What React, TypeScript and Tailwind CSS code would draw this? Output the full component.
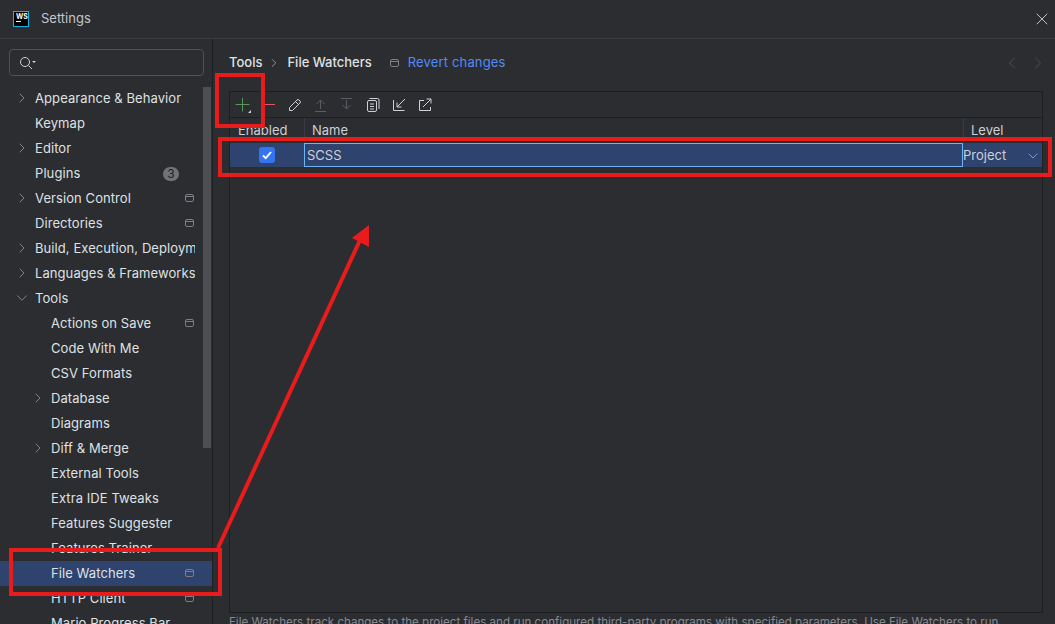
import { ChevronDown, ChevronLeft, ChevronRight, X } from "lucide-react";

type TreeItem = {
  label: string;
  depth: 0 | 1;
  arrow?: "right" | "down";
  project?: boolean;
  badge?: string;
  selected?: boolean;
};

const treeItems: TreeItem[] = [
  { label: "Appearance & Behavior", depth: 0, arrow: "right" },
  { label: "Keymap", depth: 0 },
  { label: "Editor", depth: 0, arrow: "right" },
  { label: "Plugins", depth: 0, badge: "3" },
  { label: "Version Control", depth: 0, arrow: "right", project: true },
  { label: "Directories", depth: 0, project: true },
  { label: "Build, Execution, Deployment", depth: 0, arrow: "right" },
  { label: "Languages & Frameworks", depth: 0, arrow: "right" },
  { label: "Tools", depth: 0, arrow: "down" },
  { label: "Actions on Save", depth: 1, project: true },
  { label: "Code With Me", depth: 1 },
  { label: "CSV Formats", depth: 1 },
  { label: "Database", depth: 1, arrow: "right" },
  { label: "Diagrams", depth: 1 },
  { label: "Diff & Merge", depth: 1, arrow: "right" },
  { label: "External Tools", depth: 1 },
  { label: "Extra IDE Tweaks", depth: 1 },
  { label: "Features Suggester", depth: 1 },
  { label: "Features Trainer", depth: 1 },
  { label: "File Watchers", depth: 1, project: true, selected: true },
  { label: "HTTP Client", depth: 1, project: true },
  { label: "Mario Progress Bar", depth: 1 },
];

function ProjectIcon({ className }: { className?: string }) {
  return (
    <svg width="10" height="9" viewBox="0 0 10 9" fill="none" className={className}>
      <rect x="0.5" y="0.5" width="8" height="7" rx="1.5" stroke="#7a7e85" />
      <path d="M1 2.5h7" stroke="#7a7e85" />
    </svg>
  );
}

function SearchIcon() {
  return (
    <svg width="20" height="16" viewBox="0 0 20 16" fill="none">
      <circle cx="7" cy="7" r="4.5" stroke="#ced0d6" />
      <path d="M10.5 10.5 14 14" stroke="#ced0d6" />
      <path d="M14 6h4l-2 2z" fill="#ced0d6" />
    </svg>
  );
}

function TreeRow({ item }: { item: TreeItem }) {
  return (
    <div
      className={`relative flex h-[25px] shrink-0 items-center pr-[17px] ${
        item.selected ? "bg-[#2e436e]" : ""
      } ${item.depth === 0 ? "pl-[35px]" : "pl-[51px]"}`}
    >
      {item.arrow === "right" && (
        <ChevronRight
          size={16}
          strokeWidth={1.1}
          className={`absolute top-[4px] text-[#9da0a8] ${item.depth === 0 ? "left-[14px]" : "left-[30px]"}`}
        />
      )}
      {item.arrow === "down" && (
        <ChevronDown size={18} strokeWidth={1} className="absolute left-[13px] top-[3px] text-[#9da0a8]" />
      )}
      <span className="min-w-0 flex-1 overflow-hidden whitespace-nowrap text-[13px] tracking-[0.08px] text-[#dfe1e5]">
        {item.label}
      </span>
      {item.project && <ProjectIcon className="ml-1 shrink-0" />}
      {item.badge && (
        <span className="mr-[16px] flex h-[14px] w-4 items-center justify-center rounded-full bg-[#6f737a] text-[12px] text-[#1e1f22]">
          {item.badge}
        </span>
      )}
    </div>
  );
}

function Sidebar() {
  return (
    <aside className="flex h-full w-[213px] shrink-0 flex-col overflow-hidden border-r border-[#1e1f22]">
      <div className="mx-[9px] mt-[10px] flex h-[27px] w-[195px] shrink-0 items-center rounded-[4px] border border-[#4e5157] pl-[8px]">
        <SearchIcon />
      </div>
      <div className="mt-[10px] flex min-h-0 flex-1">
        <div className="flex min-w-0 flex-1 flex-col">
          {treeItems.map((item) => (
            <TreeRow key={item.label} item={item} />
          ))}
        </div>
      </div>
    </aside>
  );
}

function ToolbarIcon({ children }: { children: React.ReactNode }) {
  return (
    <svg width="16" height="16" viewBox="0 0 16 16" fill="none" className="shrink-0">
      {children}
    </svg>
  );
}

function Toolbar() {
  return (
    <div className="flex h-[26px] shrink-0 items-center gap-[10px] border-b border-[#1e1f22] pl-[5px]">
      <svg width="16" height="16" viewBox="0 0 16 16" fill="none" className="shrink-0">
        <path d="M7.5 1v13.5M0.5 7.5h14" stroke="#57965c" strokeWidth="1" />
        <path d="M16 13v3h-3z" fill="#ced0d6" />
      </svg>
      <ToolbarIcon>
        <path d="M2 7.5h12" stroke="#db5c5c" />
      </ToolbarIcon>
      <ToolbarIcon>
        <path
          d="M2.5 13.5v-3l7.5-7.5a1.4 1.4 0 0 1 2 0l1 1a1.4 1.4 0 0 1 0 2l-7.5 7.5zM8.5 4.5l3 3"
          stroke="#ced0d6"
        />
      </ToolbarIcon>
      <ToolbarIcon>
        <path d="M7.5 12V3M3.5 7 7.5 3 11.5 7M2 14.5h11" stroke="#5a5d63" />
      </ToolbarIcon>
      <ToolbarIcon>
        <path d="M7.5 3v9M3.5 8 7.5 12 11.5 8M2 1.5h11" stroke="#5a5d63" />
      </ToolbarIcon>
      <ToolbarIcon>
        <rect x="2.5" y="3.5" width="9" height="11" rx="1.5" stroke="#ced0d6" />
        <path d="M4.5 1.5h8a1.5 1.5 0 0 1 1.5 1.5v9M5 7h4M5 9.5h4M5 12h4" stroke="#ced0d6" />
      </ToolbarIcon>
      <ToolbarIcon>
        <path d="M2.5 3v10.5h11M6 10l8-8M6 5.5V10h4.5" stroke="#ced0d6" />
      </ToolbarIcon>
      <ToolbarIcon>
        <path d="M7 3.5H2.5v10h11V10M6 10l8-8M9.5 2H14v4.5" stroke="#ced0d6" />
      </ToolbarIcon>
    </div>
  );
}

function WatchersTable() {
  return (
    <div className="ml-[16px] mr-[12px] mt-[18px] flex h-[522px] shrink-0 flex-col border border-[#1e1f22]">
      <Toolbar />
      <div className="flex h-[25px] shrink-0 text-[13px] text-[#ced0d6]">
        <div className="flex w-[75px] items-center border-r border-[#393b40] pl-[8px]">Enabled</div>
        <div className="flex flex-1 items-center border-r border-[#393b40] pl-[7px]">Name</div>
        <div className="flex w-[78px] items-center pl-[7px]">Level</div>
      </div>
      <div className="flex h-[24px] shrink-0 bg-[#2e436e] text-[13px]">
        <div className="flex w-[74px] items-center justify-center">
          <span className="flex h-4 w-4 items-center justify-center rounded-[3px] bg-[#3574f0]">
            <svg width="12" height="12" viewBox="0 0 12 12" fill="none">
              <path d="M2 6.5 4.8 9.2 10 3" stroke="#ffffff" strokeWidth="1.9" />
            </svg>
          </span>
        </div>
        <div className="flex flex-1 items-center border border-[#6fb2f5] pl-[2px] pt-[1px] text-[#ced0d6]">SCSS</div>
        <div className="flex w-[79px] items-center pt-[1px] text-[#ced0d6]">
          <span className="flex-1">Project</span>
          <ChevronDown size={16} strokeWidth={1.1} className="mr-[1px] text-[#b4b8bf]" />
        </div>
      </div>
    </div>
  );
}

function ContentPanel() {
  return (
    <main className="flex h-full min-w-0 flex-1 flex-col overflow-hidden">
      <div className="mt-[14px] flex h-[20px] shrink-0 items-center pl-[16px] pr-[7px] text-[13px]">
        <span className="font-medium text-[#dfe1e5]">Tools</span>
        <ChevronRight size={14} strokeWidth={1.5} className="ml-[5px] mr-[6px] text-[#9da0a8]" />
        <span className="font-medium text-[#dfe1e5]">File Watchers</span>
        <ProjectIcon className="ml-[18px]" />
        <span className="ml-[8px] tracking-[0.15px] text-[#548af7]">Revert changes</span>
        <div className="ml-auto flex gap-[6px] text-[#4e5157]">
          <ChevronLeft size={20} strokeWidth={1.1} />
          <ChevronRight size={20} strokeWidth={1.1} />
        </div>
      </div>
      <WatchersTable />
      <p className="ml-[16px] mt-[1px] shrink-0 whitespace-nowrap text-[11.6px] leading-[16px] text-[#868a91]">
        File Watchers track changes to the project files and run configured third-party programs with specified
        parameters. Use File Watchers to run
      </p>
    </main>
  );
}

function Annotations() {
  return (
    <>
      <div className="absolute left-[215px] top-[73px] h-[55px] w-[50px] border-[4px] border-[#e81c1c]" />
      <div className="absolute left-[218px] top-[137px] h-[40px] w-[834px] border-[4px] border-[#e81c1c]" />
      <div className="absolute left-[9px] top-[548px] h-[48px] w-[213px] border-[4px] border-[#e81c1c]" />
      <svg width="1055" height="624" viewBox="0 0 1055 624" fill="none" className="pointer-events-none absolute left-0 top-0">
        <path d="M218 548 361 238" stroke="#e81c1c" strokeWidth="4" />
        <path d="M369 225 352 238 369 247z" fill="#e81c1c" />
      </svg>
    </>
  );
}

export default function App() {
  return (
    <div className="relative flex h-[624px] w-[1055px] flex-col overflow-hidden bg-[#2b2d30] font-['Inter',sans-serif]">
      <header className="flex h-[39px] shrink-0 items-center border-b border-[#393b40] pl-[13px] pr-[3px]">
        <div className="flex h-4 w-4 flex-col border border-[#12b5e5] bg-black px-[2px] pt-[1px]">
          <span className="text-[7px] font-bold leading-[7px] text-white">WS</span>
          <span className="mt-[1px] h-px w-[5px] bg-white" />
        </div>
        <span className="ml-[12px] text-[13px] text-[#c4c6cc]">Settings</span>
        <X size={20} strokeWidth={1} className="ml-auto text-[#dfe1e5]" />
      </header>
      <div className="flex min-h-0 flex-1">
        <Sidebar />
        <ContentPanel />
      </div>
      <div className="absolute left-[203px] top-[87px] h-[361px] w-[8px] bg-[#4c4e52]" />
      <Annotations />
    </div>
  );
}
